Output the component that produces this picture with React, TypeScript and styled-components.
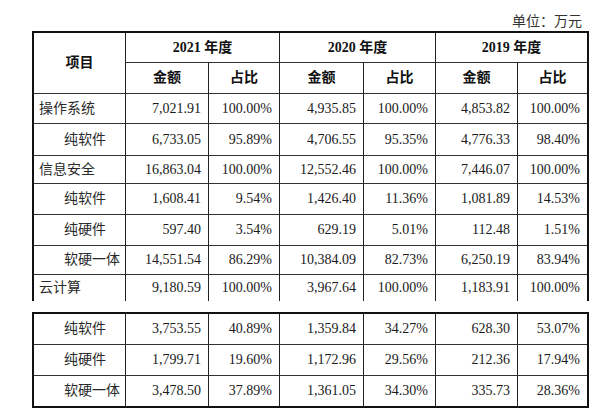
import { Fragment } from 'react';
import styled, { createGlobalStyle } from 'styled-components';

type Row = {
    label: string,
    child?: boolean,
    h: number,
    values: string[],
}

const GlobalStyle = createGlobalStyle`
    *, *::before, *::after {
        box-sizing: border-box;
    }
    body {
        margin: 0;
        background: #fff;
        color: #1a1a1a;
        font-family: "Liberation Serif", "Noto Sans CJK SC", serif;
    }
`;

const Page = styled.div`
    width: 557px;
    margin-left: 32px;
    padding-top: 13px;
`;

const Unit = styled.div`
    height: 18px;
    font-size: 14px;
    line-height: 18px;
    text-align: right;
    padding-right: 7px;
    color: #333;
`;

const Table = styled.table<{ $open?: boolean, $gap?: number }>`
    width: 557px;
    table-layout: fixed;
    border-collapse: separate;
    border-spacing: 0;
    border: 2px solid #111;
    ${props => props.$open && 'border-bottom: none;'}
    margin-top: ${props => props.$gap ?? 0}px;
    font-size: 14px;
`;

const Tr = styled.tr<{ $h: number }>`
    height: ${props => props.$h}px;
`;

const Cell = styled.td<{ $last?: boolean, $end?: boolean }>`
    padding: 0 7px 0 0;
    text-align: right;
    vertical-align: middle;
    line-height: 16px;
    white-space: nowrap;
    border-right: ${props => props.$end ? 'none' : '1px solid #222'};
    border-bottom: ${props => props.$last ? 'none' : '1px solid #333'};
`;

const Label = styled(Cell)<{ $child?: boolean }>`
    text-align: left;
    padding: 0 0 0 ${props => props.$child ? 30 : 5}px;
    color: #2a2a2a;
`;

const Head = styled(Cell)`
    text-align: center;
    padding: 0;
    font-weight: bold;
    color: #111;
`;

const widths = [92, 83, 71, 84, 72, 82, 69];

const top: Row[] = [
    { label: '操作系统', h: 30, values: ['7,021.91', '100.00%', '4,935.85', '100.00%', '4,853.82', '100.00%'] },
    { label: '纯软件', child: true, h: 32, values: ['6,733.05', '95.89%', '4,706.55', '95.35%', '4,776.33', '98.40%'] },
    { label: '信息安全', h: 28, values: ['16,863.04', '100.00%', '12,552.46', '100.00%', '7,446.07', '100.00%'] },
    { label: '纯软件', child: true, h: 31, values: ['1,608.41', '9.54%', '1,426.40', '11.36%', '1,081.89', '14.53%'] },
    { label: '纯硬件', child: true, h: 31, values: ['597.40', '3.54%', '629.19', '5.01%', '112.48', '1.51%'] },
    { label: '软硬一体', child: true, h: 29, values: ['14,551.54', '86.29%', '10,384.09', '82.73%', '6,250.19', '83.94%'] },
    { label: '云计算', h: 26, values: ['9,180.59', '100.00%', '3,967.64', '100.00%', '1,183.91', '100.00%'] },
];

const bottom: Row[] = [
    { label: '纯软件', child: true, h: 31, values: ['3,753.55', '40.89%', '1,359.84', '34.27%', '628.30', '53.07%'] },
    { label: '纯硬件', child: true, h: 31, values: ['1,799.71', '19.60%', '1,172.96', '29.56%', '212.36', '17.94%'] },
    { label: '软硬一体', child: true, h: 30, values: ['3,478.50', '37.89%', '1,361.05', '34.30%', '335.73', '28.36%'] },
];

function Cols() {
    return (
        <colgroup>
            {widths.map((w, i) => <col key={i} style={{ width: w }} />)}
        </colgroup>
    );
}

function Rows({ rows }: { rows: Row[] }) {
    return (
        <>
            {rows.map((row, r) => {
                const last = r === rows.length - 1;
                return (
                    <Tr key={r} $h={row.h}>
                        <Label $child={row.child} $last={last}>{row.label}</Label>
                        {row.values.map((v, i) => (
                            <Cell key={i} $last={last} $end={i === row.values.length - 1}>{v}</Cell>
                        ))}
                    </Tr>
                );
            })}
        </>
    );
}

export default function App() {
    const years = ['2021', '2020', '2019'];

    return (
        <Page>
            <GlobalStyle />
            <Unit>单位：万元</Unit>
            <Table $open>
                <Cols />
                <tbody>
                    <Tr $h={30}>
                        <Head rowSpan={2}>项目</Head>
                        {years.map((y, i) => (
                            <Head key={y} colSpan={2} $end={i === 2}>{y} 年度</Head>
                        ))}
                    </Tr>
                    <Tr $h={31}>
                        {years.map((y, i) => (
                            <Fragment key={y}>
                                <Head>金额</Head>
                                <Head $end={i === 2}>占比</Head>
                            </Fragment>
                        ))}
                    </Tr>
                    <Rows rows={top} />
                </tbody>
            </Table>
            <Table $gap={11}>
                <Cols />
                <tbody>
                    <Rows rows={bottom} />
                </tbody>
            </Table>
        </Page>
    );
};
